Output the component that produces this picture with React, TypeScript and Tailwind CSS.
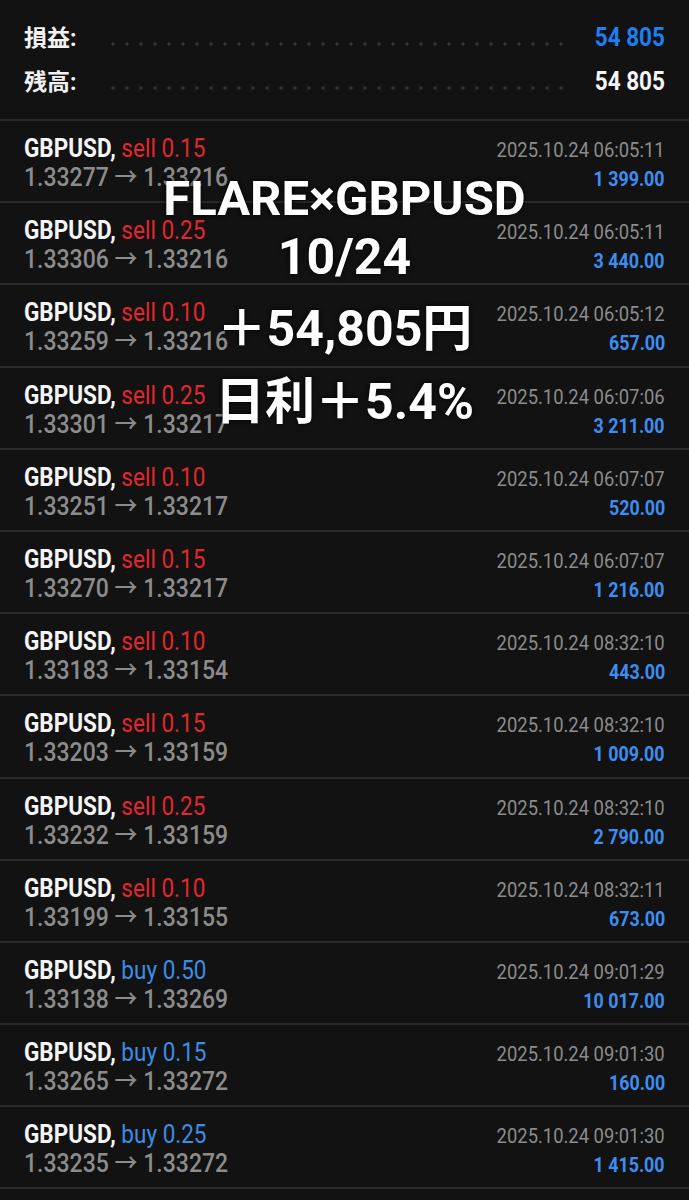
import type { ReactNode } from 'react';

interface Trade {
  side: 'sell' | 'buy';
  lot: string;
  open: string;
  close: string;
  time: string;
  profit: string;
}

const trades: Trade[] = [
  { side: 'sell', lot: '0.15', open: '1.33277', close: '1.33216', time: '2025.10.24 06:05:11', profit: '1 399.00' },
  { side: 'sell', lot: '0.25', open: '1.33306', close: '1.33216', time: '2025.10.24 06:05:11', profit: '3 440.00' },
  { side: 'sell', lot: '0.10', open: '1.33259', close: '1.33216', time: '2025.10.24 06:05:12', profit: '657.00' },
  { side: 'sell', lot: '0.25', open: '1.33301', close: '1.33217', time: '2025.10.24 06:07:06', profit: '3 211.00' },
  { side: 'sell', lot: '0.10', open: '1.33251', close: '1.33217', time: '2025.10.24 06:07:07', profit: '520.00' },
  { side: 'sell', lot: '0.15', open: '1.33270', close: '1.33217', time: '2025.10.24 06:07:07', profit: '1 216.00' },
  { side: 'sell', lot: '0.10', open: '1.33183', close: '1.33154', time: '2025.10.24 08:32:10', profit: '443.00' },
  { side: 'sell', lot: '0.15', open: '1.33203', close: '1.33159', time: '2025.10.24 08:32:10', profit: '1 009.00' },
  { side: 'sell', lot: '0.25', open: '1.33232', close: '1.33159', time: '2025.10.24 08:32:10', profit: '2 790.00' },
  { side: 'sell', lot: '0.10', open: '1.33199', close: '1.33155', time: '2025.10.24 08:32:11', profit: '673.00' },
  { side: 'buy', lot: '0.50', open: '1.33138', close: '1.33269', time: '2025.10.24 09:01:29', profit: '10 017.00' },
  { side: 'buy', lot: '0.15', open: '1.33265', close: '1.33272', time: '2025.10.24 09:01:30', profit: '160.00' },
  { side: 'buy', lot: '0.25', open: '1.33235', close: '1.33272', time: '2025.10.24 09:01:30', profit: '1 415.00' },
];

// MT5 uses a condensed face; squeeze Roboto horizontally
function Narrow({ children, right, scale = 'scale-x-[0.9]' }: { children: ReactNode; right?: boolean; scale?: string }) {
  return (
    <span className={`inline-block whitespace-nowrap ${scale} ${right ? 'origin-right' : 'origin-left'}`}>
      {children}
    </span>
  );
}

function SummaryLine({ label, value, blue }: { label: string; value: string; blue?: boolean }) {
  return (
    <div className="flex items-baseline h-[44px]">
      <span className="w-[82px] text-[23px] font-bold text-[#f2f2f2]">{label}</span>
      <div className="flex-1 h-[4px] bg-[radial-gradient(circle,#353535_1.4px,transparent_1.8px)] bg-[length:14px_4px] bg-repeat-x" />
      <span className={`ml-[18px] text-[25px] font-bold ${blue ? 'text-[#1c7ff2]' : 'text-[#f5f5f5]'}`}>
        <Narrow right scale="scale-x-[0.9]">{value}</Narrow>
      </span>
    </div>
  );
}

function TradeRow({ t }: { t: Trade }) {
  const sideColor = t.side === 'sell' ? 'text-[#e3272c]' : 'text-[#3b8de6]';
  return (
    <div className="h-[82.2px] border-b-2 border-[#2a2a2a] px-6 pt-[13px]">
      <div className="flex justify-between items-baseline h-[29px] leading-[29px]">
        <span className="text-[25px]">
          <Narrow>
            <span className="font-bold text-[#f5f5f5]">GBPUSD,</span>{' '}
            <span className={sideColor}>{t.side} {t.lot}</span>
          </Narrow>
        </span>
        <span className="text-[20px] text-[#8c8c8c]">
          <Narrow right scale="scale-x-[0.92]">{t.time}</Narrow>
        </span>
      </div>
      <div className="flex justify-between items-baseline h-[29px] leading-[29px]">
        <span className="text-[25px] font-medium text-[#8c8c8c]">
          <Narrow scale="scale-x-[0.92]">
            {t.open} → {t.close}
          </Narrow>
        </span>
        <span className="text-[21px] font-bold text-[#3d8ef0]">
          <Narrow right scale="scale-x-[0.85]">{t.profit}</Narrow>
        </span>
      </div>
    </div>
  );
}

export default function App() {
  return (
    <div className="relative w-[689px] h-[1200px] overflow-hidden bg-[#121212] font-['Roboto','Noto_Sans_CJK_JP',sans-serif]">
      {/* Summary */}
      <div className="px-6 pt-[19px] h-[121px] border-b-2 border-[#2a2a2a]">
        <SummaryLine label="損益:" value="54 805" blue />
        <SummaryLine label="残高:" value="54 805" />
      </div>

      {/* Deals */}
      {trades.map((t, i) => (
        <TradeRow key={i} t={t} />
      ))}

      {/* Caption over the list */}
      <div className="absolute left-0 right-0 top-[170px] flex flex-col items-center text-white font-bold [text-shadow:0_0_5px_rgba(0,0,0,0.9)]">
        <div className="text-[49px] leading-[57px]">FLARE×GBPUSD</div>
        <div className="mt-[2px] text-[50px] leading-[56px]">10/24</div>
        <div className="mt-[14px] text-[50px] leading-[60px]">＋54,805円</div>
        <div className="mt-[13px] text-[50px] leading-[60px]">日利＋5.4%</div>
      </div>
    </div>
  );
}
